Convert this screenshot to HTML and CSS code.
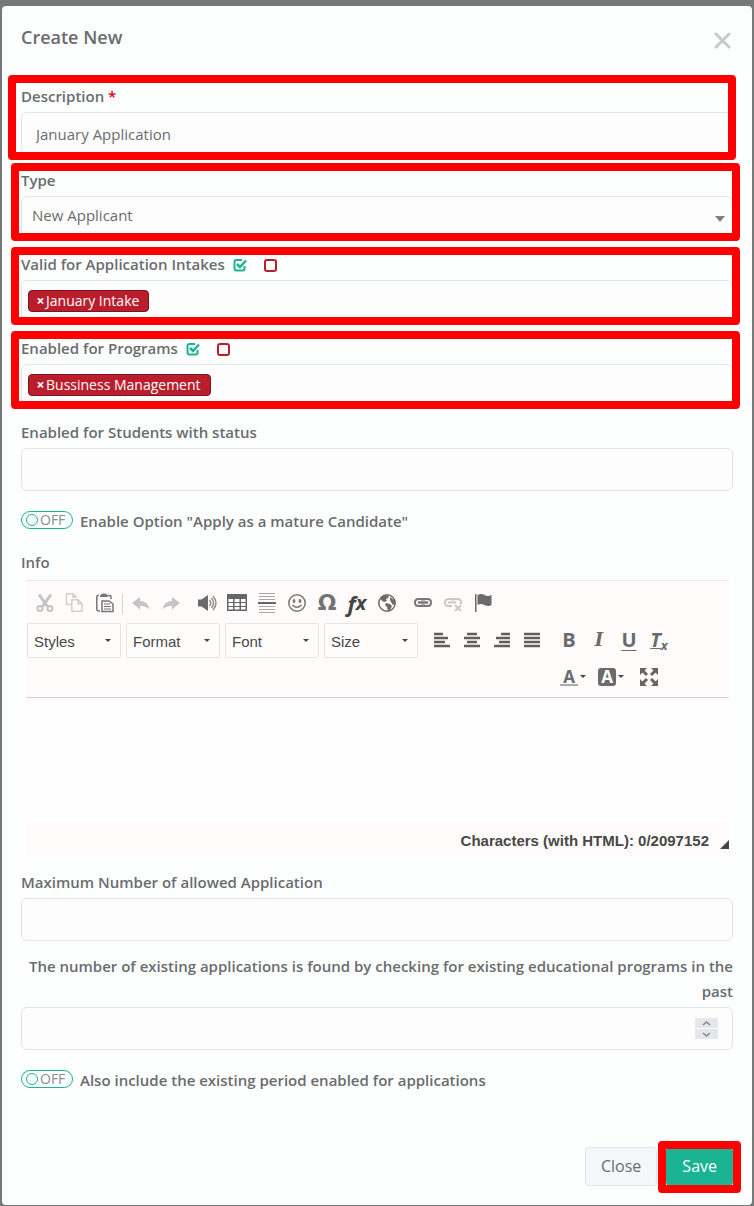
FILE: index.html
```html
<!DOCTYPE html>
<html lang="en">

<head>
  <meta charset="UTF-8">
  <meta name="viewport" content="width=device-width, initial-scale=1.0">
  <title>Create New</title>
  <link rel="stylesheet" href="styles.css">
</head>

<body>
  <form class="modal">
    <div class="modal-header">
      <h2>Create New</h2>
      <button type="button" class="close" aria-label="Close dialog">
        <svg width="17" height="17" viewBox="0 0 17 17"><path d="M2 2l13 13M15 2L2 15" stroke="#c9c9c9" stroke-width="3" stroke-linecap="round"/></svg>
      </button>
    </div>

    <div class="field marked marked-first">
      <label for="description">Description <span class="required">*</span></label>
      <input class="control" type="text" id="description" value="January Application">
    </div>

    <div class="field marked">
      <label for="type">Type</label>
      <div class="select-wrap">
        <select class="control" id="type">
          <option>New Applicant</option>
        </select>
      </div>
    </div>

    <div class="field marked">
      <div class="label-row">
        <label for="intakes">Valid for Application Intakes</label>
        <button type="button" class="mini" aria-label="Select all intakes">
          <svg width="14" height="14" viewBox="0 0 14 14" fill="none" stroke="#1ab394" stroke-width="2"><path d="M9 2H3.500Q1.500 2 1.500 4v6.500q0 2 2 2H9.500q2 0 2-2V8"/><path d="M4 6l3 3 6-6.500" stroke-width="2.500"/></svg>
        </button>
        <button type="button" class="mini" aria-label="Clear intakes">
          <svg width="14" height="14" viewBox="0 0 14 14" fill="none" stroke="#ba1e2c" stroke-width="2"><rect x="2" y="2" width="11" height="11" rx="2"/></svg>
        </button>
      </div>
      <div class="control tags">
        <span class="tag"><button type="button" class="tag-remove" aria-label="Remove January Intake">×</button>January Intake</span>
        <input type="text" id="intakes">
      </div>
    </div>

    <div class="field marked">
      <div class="label-row">
        <label for="programs">Enabled for Programs</label>
        <button type="button" class="mini" aria-label="Select all programs">
          <svg width="14" height="14" viewBox="0 0 14 14" fill="none" stroke="#1ab394" stroke-width="2"><path d="M9 2H3.500Q1.500 2 1.500 4v6.500q0 2 2 2H9.500q2 0 2-2V8"/><path d="M4 6l3 3 6-6.500" stroke-width="2.500"/></svg>
        </button>
        <button type="button" class="mini" aria-label="Clear programs">
          <svg width="14" height="14" viewBox="0 0 14 14" fill="none" stroke="#ba1e2c" stroke-width="2"><rect x="2" y="2" width="11" height="11" rx="2"/></svg>
        </button>
      </div>
      <div class="control tags">
        <span class="tag"><button type="button" class="tag-remove" aria-label="Remove Bussiness Management">×</button>Bussiness Management</span>
        <input type="text" id="programs">
      </div>
    </div>

    <div class="field">
      <label for="status">Enabled for Students with status</label>
      <input class="control" type="text" id="status">
    </div>

    <label class="toggle">
      <span class="pill"><input type="checkbox">OFF</span>
      Enable Option "Apply as a mature Candidate"
    </label>

    <label class="info-label" for="info">Info</label>
    <div class="editor">
      <div class="toolbar">
        <div class="tool-row">
          <div class="tools">
            <button type="button" aria-label="Cut"><svg viewBox="0 0 20 20" fill="none" stroke="#c4c4c4" stroke-width="2"><path d="M4 1.500l8.500 12M16 1.500L7.500 13.500" stroke-width="3"/><circle cx="5" cy="15.500" r="2.500"/><circle cx="15" cy="15.500" r="2.500"/></svg></button>
            <button type="button" aria-label="Copy"><svg viewBox="0 0 20 20" fill="none" stroke="#cfcfcf" stroke-width="1.500"><path d="M6 11.500H1.500V.800H8l3 3V5M8 .800V4h3"/><path d="M6.800 6.800H13l4 4v7.500H6.800zM13 6.800v4h4"/></svg></button>
          </div>
          <div class="tools paste">
            <button type="button" aria-label="Paste"><svg viewBox="0 0 20 20" fill="none" stroke="#77757a" stroke-width="1.500"><path d="M4 2.500H3Q1.800 2.500 1.800 4v12q0 2 2 2H5M13 2.500h1.500Q16 2.500 16 4v2"/><path d="M5 4q0-3.500 4-3.500T13 4z" fill="#77757a" stroke="none"/><path d="M7 8h7l4 3v7.500H7z"/><path d="M9 11h6M9 13.500h7M9 16h7" stroke-width="1.200"/></svg></button>
          </div>
          <div class="tools history">
            <button type="button" aria-label="Undo"><svg viewBox="0 0 20 20" fill="#c4c4c4"><path d="M1 10L9 4v4q8 0 9.500 8.500Q15 12.500 9 13v3.500z"/></svg></button>
            <button type="button" aria-label="Redo"><svg viewBox="0 0 20 20" fill="#c4c4c4"><path d="M19 10L11 4v4q-8 0-9.500 8.500Q5 12.500 11 13v3.500z"/></svg></button>
          </div>
          <div class="tools">
            <button type="button" aria-label="Sound"><svg viewBox="0 0 20 20" fill="#6b6b6b"><path d="M1 6.500h3.500L11 2v16l-6.500-4.500H1z"/><g fill="none" stroke="#929292" stroke-width="1.500"><path d="M12.500 7q2.500 3 0 6M14.500 5q4 5 0 10M16 3q6 7 0 14"/></g></svg></button>
            <button type="button" aria-label="Table"><svg viewBox="0 0 20 20"><path d="M0 1h20v17H0z" fill="#66666a"/><path d="M1.500 6h4.500v3H1.500zM7.500 6h5v3h-5zM14 6h4.500v3H14zM1.500 10h4.500v3H1.500zM7.500 10h5v3h-5zM14 10h4.500v3H14zM1.500 14h4.500v2.500H1.500zM7.500 14h5v2.500h-5zM14 14h4.500v2.500H14z" fill="#fff"/></svg></button>
            <button type="button" aria-label="Horizontal line"><svg viewBox="0 0 20 20"><path d="M2 .500h16M2 3.500h16M2 6.500h16M2 13.500h16M2 16.500h16M2 19.500h16" stroke="#a8a6a8"/><path d="M1 10h18" stroke="#666" stroke-width="2"/></svg></button>
            <button type="button" aria-label="Smiley"><svg viewBox="0 0 20 20" fill="none" stroke="#777" stroke-width="1.500"><circle cx="10" cy="10" r="8.200"/><ellipse cx="7" cy="8" rx="1.400" ry="2" fill="#777" stroke="none"/><ellipse cx="13" cy="8" rx="1.400" ry="2" fill="#777" stroke="none"/><path d="M5.500 12q4.500 4.500 9 0"/></svg></button>
            <button type="button" class="omega" aria-label="Special character">Ω</button>
            <button type="button" class="fx" aria-label="Formula">f<sub>x</sub></button>
            <button type="button" aria-label="Globe"><svg viewBox="0 0 20 20" fill="#6b6b6b"><circle cx="10" cy="10" r="8.200" fill="none" stroke="#6b6b6b" stroke-width="1.500"/><path d="M4 4l4-2 4 1-1 2-2 1 1 2-3 1-3-2zM9 10l4 1 2 2-2 4-2 1-1-4-2-2zM13 4l4 3 1 4-2 1-2-3-1-2z"/></svg></button>
          </div>
          <div class="tools">
            <button type="button" aria-label="Link"><svg viewBox="0 0 20 20" fill="none" stroke="#77777b" stroke-width="2"><path d="M9 13H5.500Q2 13 2 9.500T5.500 6H9M11 6h3.500Q18 6 18 9.500T14.500 13H11M9 5v2.500M11 5v2.500M9 11.500V14M11 11.500V14"/><path d="M5 9.500h10" stroke-width="2.500"/></svg></button>
            <button type="button" aria-label="Unlink"><svg viewBox="0 0 20 20" fill="none" stroke="#c9c9c9" stroke-width="2"><path d="M9 13H5.500Q2 13 2 9.500T5.500 6H9M11 6h3.500Q18 6 18 9.500V11M5 9.500h8M9 5v2.500M11 5v2.500"/><path d="M12 12l6 6M18 12l-6 6"/></svg></button>
            <button type="button" aria-label="Flag"><svg viewBox="0 0 20 20" fill="#6b6b6b"><path d="M2 1h1.500v18H2zM4.500 2q4-2 7 0t7 0v10q-3 2-7 0t-7 0z"/></svg></button>
          </div>
        </div>
        <div class="tool-row format-row">
          <div class="combos">
            <span class="combo"><select aria-label="Styles"><option>Styles</option></select></span>
            <span class="combo"><select aria-label="Format"><option>Format</option></select></span>
            <span class="combo"><select aria-label="Font"><option>Font</option></select></span>
            <span class="combo"><select aria-label="Size"><option>Size</option></select></span>
          </div>
          <div class="tools">
            <button type="button" aria-label="Align left"><svg viewBox="0 0 20 20" stroke="#5f5f5f" stroke-width="2.500"><path d="M2 4h9M2 8h14M2 12h11M2 16h16"/></svg></button>
            <button type="button" aria-label="Align center"><svg viewBox="0 0 20 20" stroke="#5f5f5f" stroke-width="2.500"><path d="M5 4h10M2 8h16M5 12h10M2 16h16"/></svg></button>
            <button type="button" aria-label="Align right"><svg viewBox="0 0 20 20" stroke="#5f5f5f" stroke-width="2.500"><path d="M9 4h9M4 8h14M7 12h11M2 16h16"/></svg></button>
            <button type="button" aria-label="Justify"><svg viewBox="0 0 20 20" stroke="#5f5f5f" stroke-width="2.500"><path d="M2 4h16M2 8h16M2 12h16M2 16h16"/></svg></button>
          </div>
          <div class="text-tools">
            <div class="tools">
              <button type="button" class="letter" aria-label="Bold">B</button>
              <button type="button" class="letter italic" aria-label="Italic">I</button>
              <button type="button" class="letter underline" aria-label="Underline">U</button>
              <button type="button" class="letter clear" aria-label="Remove format"><span>T</span><sub>x</sub></button>
            </div>
            <div class="tools colors">
              <button type="button" class="color" aria-label="Text color"><span class="text-color">A</span></button>
              <button type="button" class="color" aria-label="Background color"><span class="bg-color">A</span></button>
              <button type="button" aria-label="Maximize"><svg viewBox="0 0 20 20" fill="#666" stroke="#666" stroke-width="3"><path d="M3 3l5 5M17 3l-5 5M3 17l5-5M17 17l-5-5"/><path d="M1 1h7L1 8zM19 1h-7l7 7zM1 19h7l-7-7zM19 19h-7l7-7z" stroke="none"/></svg></button>
            </div>
          </div>
        </div>
      </div>
      <textarea id="info"></textarea>
      <div class="editor-footer">
        <span>Characters (with HTML): 0/2097152</span>
        <svg class="resizer" width="9" height="9" viewBox="0 0 9 9"><path d="M9 0v9H0z" fill="#444"/></svg>
      </div>
    </div>

    <div class="field">
      <label for="maximum">Maximum Number of allowed Application</label>
      <input class="control" type="text" id="maximum">
    </div>

    <div class="field">
      <label class="note" for="existing">The number of existing applications is found by checking for existing educational programs in the past</label>
      <div class="control number">
        <input type="number" id="existing">
        <div class="spinner">
          <button type="button" aria-label="Increase"><svg width="9" height="5" viewBox="0 0 9 5"><path d="M1 4l3.500-3L8 4" fill="none" stroke="#85858a" stroke-width="1.500"/></svg></button>
          <button type="button" aria-label="Decrease"><svg width="9" height="5" viewBox="0 0 9 5"><path d="M1 1l3.500 3L8 1" fill="none" stroke="#85858a" stroke-width="1.500"/></svg></button>
        </div>
      </div>
    </div>

    <label class="toggle">
      <span class="pill"><input type="checkbox">OFF</span>
      Also include the existing period enabled for applications
    </label>

    <div class="modal-footer">
      <button type="button" class="btn">Close</button>
      <div class="save-wrap">
        <button type="submit" class="btn btn-primary">Save</button>
      </div>
    </div>
  </form>
</body>

</html>
```
FILE: styles.css
```css
* {
  box-sizing: border-box;
}

body {
  margin: 0;
  padding: 6px 2px 1px;
  background-color: #777878;
  font-family: "Open Sans", "Noto Sans", sans-serif;
  font-size: 14px;
  line-height: 25px;
  color: #6a6c6f;
}

button,
input,
select,
textarea {
  font: inherit;
  color: inherit;
}

button {
  padding: 0;
  border: none;
  background: none;
  cursor: pointer;
}

svg {
  display: block;
}

.modal {
  padding: 0 19px 19px;
  background-color: #fdfefe;
  border-radius: 4px;
}

.modal-header {
  display: flex;
  justify-content: space-between;
  align-items: flex-start;
  height: 78px;
  padding-top: 19px;
}

.modal-header h2 {
  margin: 0;
  font-size: 18px;
  font-weight: 600;
}

.close {
  padding: 7px 2px;
}

/* form fields */
.field {
  position: relative;
  margin-bottom: 13px;
}

.field label,
.info-label,
.toggle {
  display: block;
  font-size: 15px;
  font-weight: 600;
}

.required {
  color: #d8000c;
}

.control {
  display: block;
  width: 100%;
  height: 43px;
  margin-top: 3px;
  padding: 0 14px;
  border: 1px solid #dfe4ee;
  border-radius: 6px;
  background-color: #fdfdfd;
  font-size: 15px;
  outline: none;
}

.select-wrap {
  position: relative;
}

.select-wrap select {
  appearance: none;
  padding: 0 10px 4px;
}

.select-wrap::after {
  content: "";
  position: absolute;
  right: 8px;
  top: 20px;
  border: 5px solid transparent;
  border-top: 6px solid #808080;
  border-bottom: 0;
}

.label-row {
  display: flex;
  align-items: center;
}

.mini {
  margin-left: 8px;
  padding-top: 1px;
}

.mini + .mini {
  margin-left: 16px;
}

.tags {
  display: flex;
  align-items: center;
  padding: 0 6px 2px;
  font-size: 14px;
}

.tags input {
  flex: 1;
  min-width: 0;
  border: none;
  background: none;
  outline: none;
}

.tag {
  height: 22px;
  padding: 0 9px 0 6px;
  border: 1px solid #7d141d;
  border-radius: 4px;
  background-color: #ba1e2c;
  color: #fff;
  line-height: 20px;
}

.tag-remove {
  width: 11px;
  font-weight: 700;
}

/* red frames over the highlighted parts */
.marked::after,
.save-wrap::after {
  content: "";
  position: absolute;
  inset: -5px -7px -2px -10px;
  border: 8px solid #f00;
  border-radius: 4px;
  pointer-events: none;
}

.marked-first::after {
  inset: -9px -3px -5px -13px;
}

/* toggles */
.toggle {
  display: flex;
  gap: 7px;
  margin: 18px 0 16px;
}

.pill {
  display: flex;
  align-items: center;
  gap: 2px;
  width: 52px;
  height: 18px;
  margin-top: 2px;
  padding-left: 4px;
  border: 1px solid #1ab394;
  border-radius: 9px;
  font-size: 14px;
  font-weight: 400;
  line-height: 16px;
  color: #8b8d90;
}

.pill input {
  appearance: none;
  width: 12px;
  height: 12px;
  margin: 0;
  border: 1px solid #1ab394;
  border-radius: 50%;
}

/* editor */
.editor {
  margin: 5px 4px 14px 5px;
  font-family: "Liberation Sans", Arial, sans-serif;
  font-size: 15px;
}

.toolbar {
  height: 118px;
  padding: 8px 1px 0;
  border-top: 1px solid #e8e8ea;
  border-bottom: 1px solid #d3d1d1;
  background-color: #fffbfb;
}

.tool-row,
.tools {
  display: flex;
}

.tool-row {
  gap: 6px;
  padding-left: 3px;
}

.tools button {
  display: flex;
  align-items: center;
  justify-content: center;
  width: 30px;
  height: 28px;
}

.tools svg {
  width: 20px;
  height: 20px;
}

.paste {
  margin-left: -6px;
}

.history {
  position: relative;
}

.history::before {
  content: "";
  position: absolute;
  left: -4px;
  top: 5px;
  height: 20px;
  border-left: 1px solid #d5d5d5;
}

.tools .omega {
  font: bold 22px/28px "DejaVu Sans", sans-serif;
  color: #737373;
}

.tools .fx {
  font: italic bold 22px/24px "Open Sans", sans-serif;
  color: #444;
}

.fx sub {
  font-size: 20px;
  line-height: 24px;
}

.format-row {
  gap: 7px;
  padding: 6px 0 0;
}

.combos {
  display: flex;
  gap: 5px;
  padding-right: 2px;
}

.combo {
  position: relative;
}

.combo select {
  appearance: none;
  display: block;
  width: 94px;
  height: 35px;
  padding: 2px 6px 0;
  border: 1px solid #e6e4e4;
  border-radius: 2px;
  background-color: #fffcfc;
  color: #484848;
  outline: none;
}

.combo::after,
.color::after {
  content: "";
  border: 3px solid transparent;
  border-top-color: #444;
  border-bottom: 0;
}

.combo::after {
  position: absolute;
  right: 10px;
  top: 16px;
}

.format-row .tools button {
  height: 33px;
}

.tools .letter {
  font: bold 20px/33px "Open Sans", sans-serif;
  color: #6b6b6b;
}

.tools .italic {
  font-family: "DejaVu Serif", serif;
  font-style: italic;
  font-size: 18px;
}

.tools .underline {
  text-decoration: underline;
  text-decoration-thickness: 1px;
  text-underline-offset: 3px;
}

.tools .clear {
  font-style: italic;
}

.clear span {
  text-decoration: underline;
  text-decoration-thickness: 1px;
}

.clear sub {
  align-self: flex-end;
  padding-bottom: 4px;
  font-size: 13px;
  line-height: 13px;
}

.colors {
  padding-top: 4px;
}

.colors button {
  width: 38px;
}

.tools .color {
  gap: 2px;
}

.text-color,
.bg-color {
  width: 18px;
  height: 18px;
  font: bold 17px/17px "Open Sans", sans-serif;
  color: #6b6b6b;
}

.text-color {
  border-bottom: 2px solid #aaa;
}

.bg-color {
  border-radius: 3px;
  background-color: #6b6b6b;
  color: #fff;
}

.editor textarea {
  display: block;
  width: 100%;
  height: 125px;
  border: none;
  background-color: #fefefe;
  resize: none;
  outline: none;
}

.editor-footer {
  display: flex;
  justify-content: flex-end;
  gap: 11px;
  height: 33px;
  padding-top: 5px;
  background-color: #fffbfb;
  font-weight: 700;
  color: #484848;
}

.resizer {
  margin-top: 12px;
}

.field .note {
  text-align: right;
}

.number {
  display: flex;
  align-items: center;
}

.number input {
  flex: 1;
  min-width: 0;
  border: none;
  background: none;
  outline: none;
  appearance: textfield;
}

.number input::-webkit-inner-spin-button {
  display: none;
}

.spinner {
  display: flex;
  flex-direction: column;
  gap: 1px;
}

.spinner button {
  display: flex;
  align-items: center;
  justify-content: center;
  width: 23px;
  height: 10px;
  background-color: #e6e7ea;
}

/* footer */
.modal-footer {
  display: flex;
  justify-content: flex-end;
  gap: 9px;
  padding-top: 38px;
}

.save-wrap {
  position: relative;
}

.save-wrap::after {
  inset: -6px -8px -7px;
}

.btn {
  height: 39px;
  padding: 0 15px;
  border: 1px solid #e4e5e8;
  border-radius: 4px;
  background-color: #f6f7fa;
  font-size: 16px;
}

.btn-primary {
  border-color: #1ab394;
  background-color: #1ab394;
  color: #fff;
}
```
